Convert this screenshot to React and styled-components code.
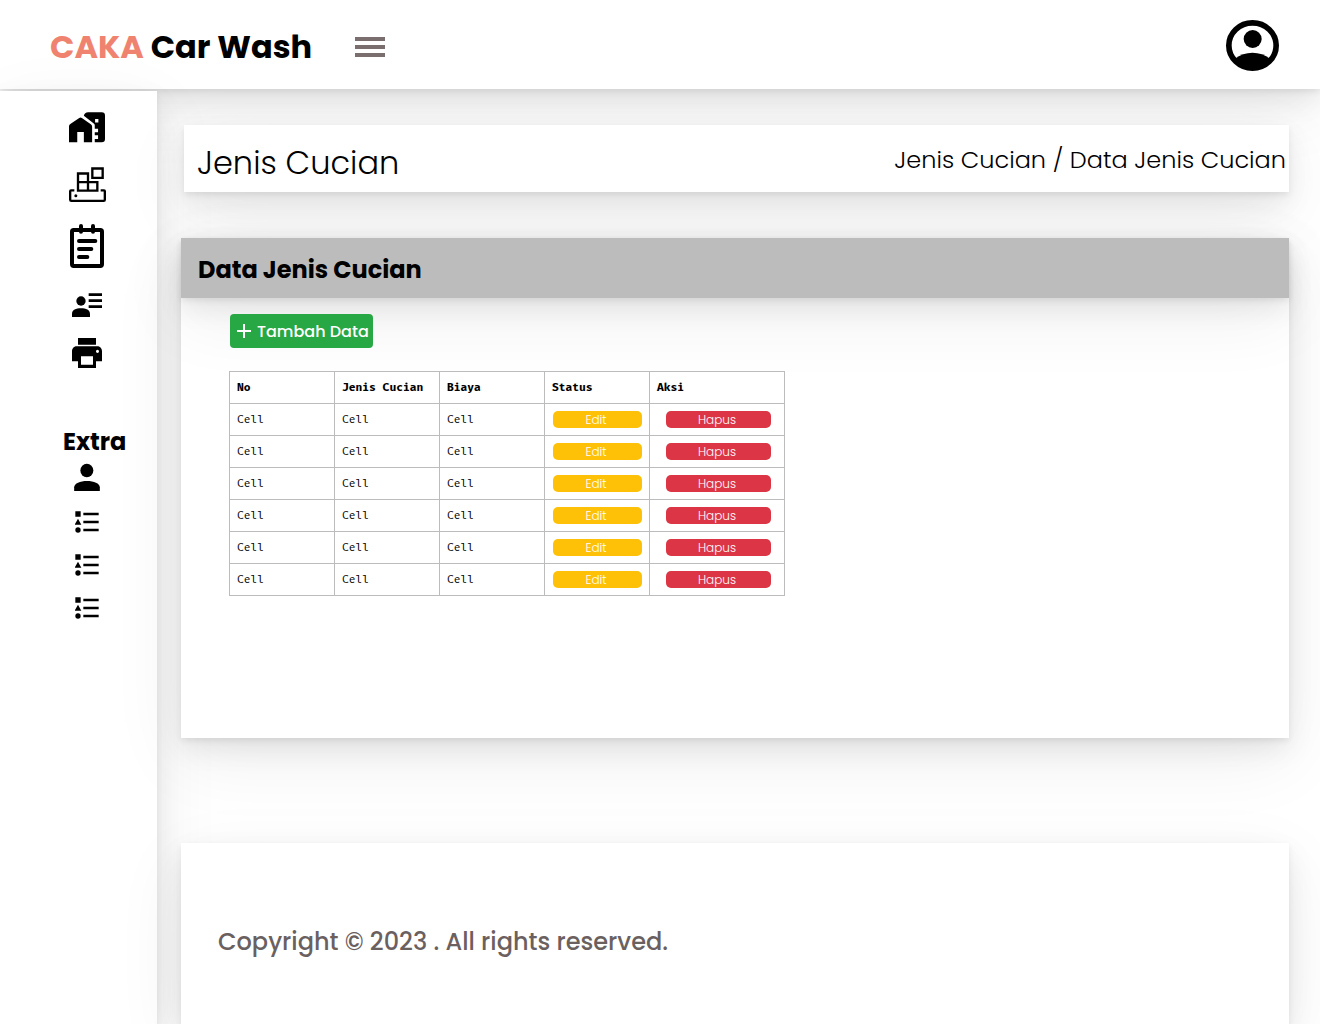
import React from "react";
import styled, { createGlobalStyle } from "styled-components";

const display = `Poppins, Inter, "Open Sans", sans-serif`;
const mono = `"Fira Code", "Fira Mono", "DejaVu Sans Mono", "Liberation Mono", monospace`;
const softShadow = `
  0 20px 70px rgba(0, 0, 0, 0.07),
  0 11px 26px rgba(0, 0, 0, 0.08),
  0 3px 6px rgba(0, 0, 0, 0.07)`;

const GlobalStyle = createGlobalStyle`
  *, *::before, *::after { box-sizing: border-box; }
  body {
    margin: 0;
    background: #fff;
    color: #000;
    font-family: ${display};
  }
  h1, h2, p, ul { margin: 0; padding: 0; }
  button { font-family: inherit; border: 0; padding: 0; cursor: pointer; }
`;

const Page = styled.div`
  display: flex;
  flex-direction: column;
  gap: 2px;
  min-height: 100vh;
  overflow: hidden;
`;

const TopBar = styled.header`
  display: flex;
  align-items: center;
  height: 89px;
  padding: 4px 41px 0 50px;
  background: #fff;
  box-shadow: ${softShadow};
`;

const Brand = styled.a`
  color: #000;
  font-size: 32px;
  font-weight: 700;
  line-height: 48px;
  margin-right: 43px;
  text-decoration: none;
  white-space: nowrap;
`;

const Accent = styled.span`
  color: #f0836f;
`;

const MenuButton = styled.button`
  display: flex;
  background: none;
`;

const AccountButton = styled.button`
  display: flex;
  margin-left: auto;
  padding-bottom: 2px;
  background: none;
`;

const Body = styled.div`
  display: flex;
  flex: 1;
`;

const Sidebar = styled.aside`
  flex: 0 0 157px;
  padding-top: 21px;
  background: #fff;
  box-shadow: ${softShadow};
`;

const NavList = styled.ul`
  display: flex;
  flex-direction: column;
  align-items: center;
  gap: ${(p) => p.$gap}px;
  padding-left: 17px;
  list-style: none;
`;

const NavLink = styled.a`
  display: flex;
  color: #000;
`;

const SidebarHeading = styled.h2`
  margin: 56px 0 3px;
  padding-left: 63px;
  font-size: 24px;
  font-weight: 700;
  line-height: 36px;
`;

const Main = styled.main`
  display: flex;
  flex-direction: column;
  flex: 1;
  min-width: 0;
  padding: 34px 31px 0 24px;
`;

const TitleBar = styled.section`
  display: flex;
  justify-content: space-between;
  align-items: center;
  height: 67px;
  margin: 0 0 46px 3px;
  padding: 2px 3px 0 13px;
  background: #fff;
  box-shadow: ${softShadow};
`;

const PageTitle = styled.h1`
  padding-top: 6px;
  font-size: 32px;
  font-weight: 300;
  line-height: 48px;
`;

const Crumbs = styled.nav`
  font-size: 24px;
  font-weight: 300;
  line-height: 36px;
  white-space: nowrap;
`;

const CrumbLink = styled.a`
  color: inherit;
  text-decoration: none;
`;

const Card = styled.section`
  min-height: 500px;
  margin-bottom: 105px;
  background: #fff;
  box-shadow: ${softShadow};
`;

const CardHeader = styled.header`
  display: flex;
  align-items: center;
  height: 60px;
  padding: 4px 17px 0;
  background: #bcbcbc;
  box-shadow: ${softShadow};
`;

const CardTitle = styled.h2`
  font-size: 24px;
  font-weight: 700;
  line-height: 36px;
`;

const CardBody = styled.div`
  padding: 16px 48px;
`;

const AddButton = styled.button`
  display: flex;
  align-items: center;
  gap: 6px;
  height: 34px;
  margin: 0 0 23px 1px;
  padding: 0 4px 0 7px;
  border-radius: 4px;
  background: #28a745;
  color: #fff;
  font-size: 16px;
  font-weight: 500;
  white-space: nowrap;
`;

const Table = styled.table`
  width: 556px;
  table-layout: fixed;
  border-collapse: collapse;
  background: #fff;
  font-family: ${mono};
  font-size: 11px;
  line-height: 16px;
`;

const Column = styled.col`
  width: ${(p) => p.$width}px;
`;

const Row = styled.tr`
  height: 32px;
`;

const HeadCell = styled.th`
  padding: 0 7px;
  border: 1px solid #bcbcbc;
  font-weight: 700;
  text-align: left;
  white-space: nowrap;
`;

const Cell = styled.td`
  padding: 0 0 0 ${(p) => p.$inset || 7}px;
  border: 1px solid #bcbcbc;
`;

const RowButton = styled.button`
  display: block;
  width: ${(p) => p.$width}px;
  height: 17px;
  padding-right: 3px;
  border-radius: 5px;
  background: ${(p) => p.$color};
  color: #fff;
  font-family: ${display};
  font-size: 12px;
  font-weight: 300;
  line-height: 17px;
`;

const Footer = styled.footer`
  flex: 1;
  min-height: 181px;
  padding: 81px 37px 0;
  background: #fff;
  box-shadow: ${softShadow};
  color: #6b6060;
  font-size: 24px;
  font-weight: 500;
  line-height: 36px;
`;

const HomeIcon = () => (
  <svg width="36" height="33" viewBox="0 0 109 99" fill="currentColor" aria-hidden="true">
    <path d="M0 91V43Q0 39 4 36L31 18Q35 15 39 18L66 37Q70 40 70 44V91H45V60H25V91Z" />
    <path
      fillRule="evenodd"
      d="M45 11Q47 0 58 0H99Q109 0 109 10V81Q109 91 99 91H78V81H88V70H78V61H88V50H78V40Q78 36 75 34ZM79 21V31H89V21Z"
    />
  </svg>
);

const BoxesIcon = () => (
  <svg width="37" height="35" viewBox="0 0 111 105" fill="none" stroke="currentColor" strokeWidth="7" aria-hidden="true">
    <path d="M70 4.500H101V32.500H70ZM27 19.500H57V71H27ZM27 45.500H85V71H57" />
    <path d="M16 70H6Q3.500 70 3.500 73V98Q3.500 101.500 7 101.500H104Q107.500 101.500 107.500 98V73Q107.500 70 105 70H95" />
    <circle cx="20.500" cy="86" r="4.500" fill="currentColor" stroke="none" />
  </svg>
);

const NoteIcon = () => (
  <svg width="34" height="44" viewBox="0 0 102 132" fill="none" stroke="currentColor" strokeWidth="12" strokeLinecap="round" aria-hidden="true">
    <rect x="6" y="18" width="90" height="108" rx="5" />
    <path d="M33 6V23M69 6V23M27 51H76M27 75H64M27 99H52" />
  </svg>
);

const ContactIcon = () => (
  <svg width="30" height="26" viewBox="0 -11 90 78" overflow="visible" fill="currentColor" aria-hidden="true">
    <circle cx="27" cy="22" r="14" />
    <path d="M0 70V61C0 49 12 44 27 44S54 49 54 61V70ZM50 -1H90V7H50ZM50 17H90V25H50ZM50 35H90V43H50Z" />
  </svg>
);

const PrintIcon = () => (
  <svg width="30" height="30" viewBox="2 3 20 18" preserveAspectRatio="none" fill="currentColor" aria-hidden="true">
    <path d="M19 8H5c-1.660 0-3 1.340-3 3v6h4v4h12v-4h4v-6c0-1.660-1.340-3-3-3zm-3 11H8v-5h8v5zm3-7c-.55 0-1-.45-1-1s.45-1 1-1 1 .45 1 1-.45 1-1 1zm-1-9H6v4h12V3z" />
  </svg>
);

const PersonIcon = () => (
  <svg width="26" height="27" viewBox="0 -2 77 81" overflow="visible" fill="currentColor" aria-hidden="true">
    <ellipse cx="38" cy="20.500" rx="19.500" ry="20.500" />
    <path d="M0 82V71C0 59 18 52 38.500 52S77 59 77 71V82Z" />
  </svg>
);

const CategoryListIcon = () => (
  <svg width="24" height="22" viewBox="-1 0 72 66" fill="currentColor" aria-hidden="true">
    <path d="M0 1H16V17H0ZM8 23L18 41H-2ZM24 5H70V13H24ZM24 29H70V37H24ZM24 53H70V61H24Z" />
    <circle cx="8" cy="57" r="8" />
  </svg>
);

const AccountIcon = () => (
  <svg width="53" height="51" viewBox="0 0 159 153" aria-hidden="true">
    <ellipse cx="79.500" cy="76.500" rx="71" ry="68" fill="none" stroke="#000" strokeWidth="17" />
    <circle cx="80" cy="57" r="27" />
    <path d="M26 117Q50 98 79.500 98T133 117Q112 147 79.500 147T26 117Z" />
  </svg>
);

const MenuIcon = () => (
  <svg width="30" height="20" viewBox="0 0 30 20" fill="#7b6e6e" aria-hidden="true">
    <path d="M0 0H30V4H0ZM0 8H30V12H0ZM0 16H30V20H0Z" />
  </svg>
);

const PlusIcon = () => (
  <svg width="14" height="14" viewBox="0 0 14 14" fill="none" stroke="#fff" strokeWidth="2" aria-hidden="true">
    <path d="M7 0V14M0 7H14" />
  </svg>
);

const mainLinks = [
  { label: "Beranda", Icon: HomeIcon },
  { label: "Jenis Cucian", Icon: BoxesIcon },
  { label: "Transaksi", Icon: NoteIcon },
  { label: "Pelanggan", Icon: ContactIcon },
  { label: "Cetak", Icon: PrintIcon },
];

const extraLinks = [
  { label: "Profil", Icon: PersonIcon },
  { label: "Kategori 1", Icon: CategoryListIcon },
  { label: "Kategori 2", Icon: CategoryListIcon },
  { label: "Kategori 3", Icon: CategoryListIcon },
];

const columns = [
  { title: "No", width: 105 },
  { title: "Jenis Cucian", width: 105 },
  { title: "Biaya", width: 105 },
  { title: "Status", width: 105 },
  { title: "Aksi", width: 135 },
];

const rows = Array.from({ length: 6 }, (_, id) => ({ id, no: "Cell", jenis: "Cell", biaya: "Cell" }));

const Links = ({ items, gap }) => (
  <NavList $gap={gap}>
    {items.map(({ label, Icon }) => (
      <li key={label}>
        <NavLink href="#" aria-label={label}>
          <Icon />
        </NavLink>
      </li>
    ))}
  </NavList>
);

export default function App() {
  return (
    <Page>
      <GlobalStyle />
      <TopBar>
        <Brand href="#">
          <Accent>CAKA</Accent> Car Wash
        </Brand>
        <MenuButton type="button" aria-label="Menu">
          <MenuIcon />
        </MenuButton>
        <AccountButton type="button" aria-label="Akun">
          <AccountIcon />
        </AccountButton>
      </TopBar>
      <Body>
        <Sidebar>
          <Links items={mainLinks} gap={22} />
          <SidebarHeading>Extra</SidebarHeading>
          <Links items={extraLinks} gap={21} />
        </Sidebar>
        <Main>
          <TitleBar>
            <PageTitle>Jenis Cucian</PageTitle>
            <Crumbs aria-label="Breadcrumb">
              <CrumbLink href="#">Jenis Cucian</CrumbLink> / <span>Data Jenis Cucian</span>
            </Crumbs>
          </TitleBar>
          <Card>
            <CardHeader>
              <CardTitle>Data Jenis Cucian</CardTitle>
            </CardHeader>
            <CardBody>
              <AddButton type="button">
                <PlusIcon />
                Tambah Data
              </AddButton>
              <Table>
                <colgroup>
                  {columns.map((c) => (
                    <Column key={c.title} $width={c.width} />
                  ))}
                </colgroup>
                <thead>
                  <Row>
                    {columns.map((c) => (
                      <HeadCell key={c.title} scope="col">
                        {c.title}
                      </HeadCell>
                    ))}
                  </Row>
                </thead>
                <tbody>
                  {rows.map((row) => (
                    <Row key={row.id}>
                      <Cell>{row.no}</Cell>
                      <Cell>{row.jenis}</Cell>
                      <Cell>{row.biaya}</Cell>
                      <Cell $inset={8}>
                        <RowButton type="button" $color="#ffc107" $width={89}>
                          Edit
                        </RowButton>
                      </Cell>
                      <Cell $inset={16}>
                        <RowButton type="button" $color="#dc3545" $width={105}>
                          Hapus
                        </RowButton>
                      </Cell>
                    </Row>
                  ))}
                </tbody>
              </Table>
            </CardBody>
          </Card>
          <Footer>
            <p>Copyright © 2023 . All rights reserved.</p>
          </Footer>
        </Main>
      </Body>
    </Page>
  );
}
